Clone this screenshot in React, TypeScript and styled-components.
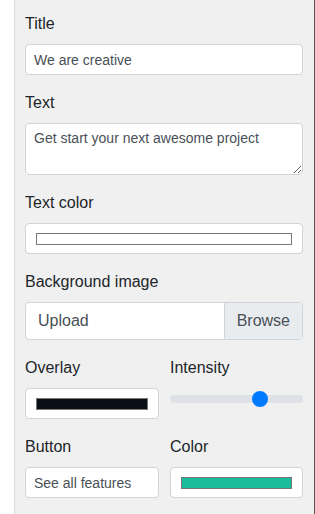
import styled, { createGlobalStyle } from 'styled-components'
import { useState } from 'react'

const GlobalStyle = createGlobalStyle`
	* {
		box-sizing: border-box;
	}
	body {
		margin: 0;
		background: #fff;
		font-family: 'Liberation Sans', Arial, sans-serif;
		color: #212529;
	}
`

const Panel = styled.aside`
	margin-left: 14px;
	width: 301px;
	min-height: 514px;
	background: #f0f0f0;
	border-left: 1px solid #dcdcdc;
	border-right: 1px solid #555;
	padding: 12px 11px 0 10px;
`

const Group = styled.div`
	margin-bottom: 16px;
`

const Label = styled.label`
	display: block;
	font-size: 16px;
	line-height: 24px;
	margin-bottom: 8px;
`

const fieldBase = `
	display: block;
	width: 100%;
	font-family: inherit;
	font-size: 14px;
	line-height: 21px;
	color: #495057;
	background: #fff;
	border: 1px solid #ced4da;
	border-radius: 4px;
	padding: 4px 8px;
	outline: none;
`

const TextInput = styled.input`
	${fieldBase}
	height: 31px;
`

const TextArea = styled.textarea`
	${fieldBase}
	height: 52px;
	resize: vertical;
	margin: 0;
`

const ColorField = styled.div`
	display: flex;
	align-items: center;
	height: 31px;
	padding: 0 10px;
	background: #fff;
	border: 1px solid #ced4da;
	border-radius: 4px;
`

const Swatch = styled.span<{ $color: string }>`
	flex: 1;
	height: 12px;
	background: ${p => p.$color};
	border: 1px solid #777;
`

const FileGroup = styled.div`
	display: flex;
	height: 38px;
	background: #fff;
	border: 1px solid #ced4da;
	border-radius: 4px;
	overflow: hidden;
	font-size: 16px;
	line-height: 24px;
	color: #495057;
`

const FileLabel = styled.span`
	flex: 1;
	padding: 6px 12px;
`

const Browse = styled.span`
	padding: 6px 12px;
	background: #e9ecef;
	border-left: 1px solid #ced4da;
`

const Row = styled.div`
	display: grid;
	grid-template-columns: 134px 1fr;
	column-gap: 11px;
`

const Range = styled.input`
	display: block;
	width: 100%;
	height: 22px;
	margin: 0;
	padding: 0;
	background: transparent;
	-webkit-appearance: none;
	appearance: none;
	&::-webkit-slider-runnable-track {
		height: 8px;
		background: #dee2e6;
		border-radius: 16px;
		border: 0;
	}
	&::-webkit-slider-thumb {
		-webkit-appearance: none;
		appearance: none;
		width: 16px;
		height: 16px;
		margin-top: -4px;
		background: #007bff;
		border: 0;
		border-radius: 50%;
	}
	&:focus {
		outline: none;
	}
`

const App = () => {
	const [title, setTitle] = useState('We are creative')
	const [text, setText] = useState('Get start your next awesome project')
	const [intensity, setIntensity] = useState(70)
	const [button, setButton] = useState('See all features')

	return (
		<>
			<GlobalStyle />
			<Panel>
				<Group>
					<Label>Title</Label>
					<TextInput value={title} onChange={e => setTitle(e.target.value)} />
				</Group>
				<Group>
					<Label>Text</Label>
					<TextArea rows={2} value={text} onChange={e => setText(e.target.value)} />
				</Group>
				<Group>
					<Label>Text color</Label>
					<ColorField>
						<Swatch $color='#ffffff' />
					</ColorField>
				</Group>
				<Group>
					<Label>Background image</Label>
					<FileGroup>
						<FileLabel>Upload</FileLabel>
						<Browse>Browse</Browse>
					</FileGroup>
				</Group>
				<Row>
					<Group>
						<Label>Overlay</Label>
						<ColorField>
							<Swatch $color='#0a0e16' />
						</ColorField>
					</Group>
					<Group>
						<Label>Intensity</Label>
						<Range
							type='range'
							min={0}
							max={100}
							value={intensity}
							onChange={e => setIntensity(Number(e.target.value))}
						/>
					</Group>
				</Row>
				<Row>
					<Group>
						<Label>Button</Label>
						<TextInput value={button} onChange={e => setButton(e.target.value)} />
					</Group>
					<Group>
						<Label>Color</Label>
						<ColorField>
							<Swatch $color='#1abc9c' />
						</ColorField>
					</Group>
				</Row>
			</Panel>
		</>
	)
}

export default App
